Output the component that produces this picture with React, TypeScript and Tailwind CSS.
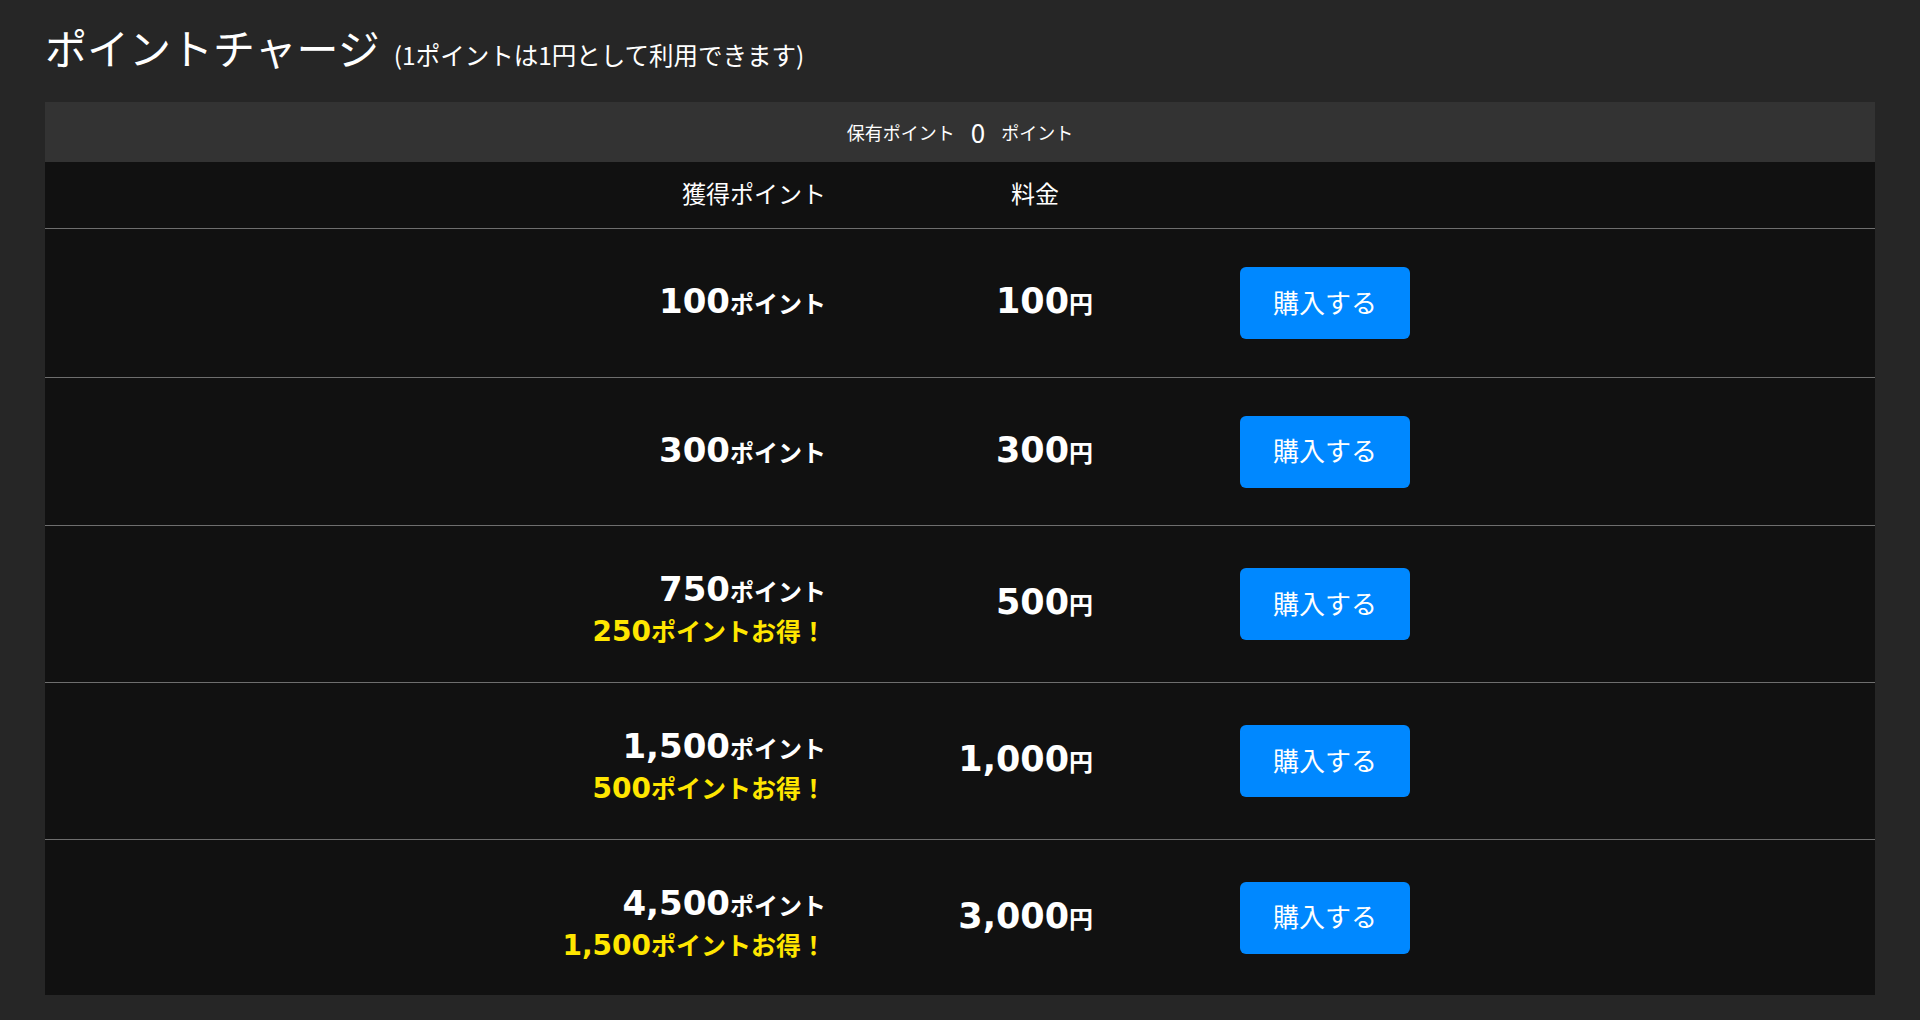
import React from "react";

type Row = {
  points: string;
  bonus?: string;
  price: string;
  h: string;
};

const rows: Row[] = [
  { points: "100", price: "100", h: "h-[149px]" },
  { points: "300", price: "300", h: "h-[148px]" },
  { points: "750", bonus: "250", price: "500", h: "h-[157px]" },
  { points: "1,500", bonus: "500", price: "1,000", h: "h-[157px]" },
  { points: "4,500", bonus: "1,500", price: "3,000", h: "h-[156px]" },
];

export default function App() {
  return (
    <div className="min-h-screen bg-[#262626] px-[45px] text-white font-['Noto_Sans_CJK_JP',sans-serif]">
      <div className="flex h-[102px] items-baseline pt-[19px]">
        <h1 className="text-[42px] font-normal leading-[56px]">ポイントチャージ</h1>
        <span className="ml-[14px] text-[24.5px] leading-[56px]">(1ポイントは1円として利用できます)</span>
      </div>

      <div className="bg-[#111111]">
        <div className="flex h-[60px] items-center justify-center bg-[#333333]">
          <span className="text-[18px]">保有ポイント</span>
          <span className="mx-[16px] text-[26px] leading-none">0</span>
          <span className="text-[18px]">ポイント</span>
        </div>

        <div className="grid h-[66px] grid-cols-[781px_267px_1fr] items-center pb-[5px]">
          <div className="text-right text-[24px]">獲得ポイント</div>
          <div className="pr-[34px] text-right text-[24px]">料金</div>
          <div />
        </div>

        {rows.map((r) => (
          <div
            key={r.points}
            className={`grid grid-cols-[781px_267px_1fr] items-center border-t border-[#6e6e6e] ${r.h}`}
          >
            <div className={`flex flex-col items-end ${r.bonus ? "mt-[12px]" : ""}`}>
              <div className="text-[24px] font-bold leading-[40px]">
                <span className="font-['DejaVu_Sans','Noto_Sans_CJK_JP',sans-serif] text-[34px] leading-none">
                  {r.points}
                </span>
                <span className="leading-none">ポイント</span>
              </div>
              {r.bonus && (
                <div className="text-[25px] font-bold leading-[38px] text-[#ffe600]">
                  <span className="font-['DejaVu_Sans','Noto_Sans_CJK_JP',sans-serif] text-[28px] leading-none">
                    {r.bonus}
                  </span>
                  <span className="leading-none">ポイントお得！</span>
                </div>
              )}
            </div>
            <div className="flex justify-end">
              <div className="text-[24px] font-bold leading-[40px]">
                <span className="font-['DejaVu_Sans','Noto_Sans_CJK_JP',sans-serif] text-[35px] leading-none">
                  {r.price}
                </span>
                <span className="leading-none">円</span>
              </div>
            </div>
            <div>
              <button className="ml-[147px] h-[72px] w-[170px] rounded-[6px] bg-[#0088ff] pb-[4px] text-[26px] text-white">
                購入する
              </button>
            </div>
          </div>
        ))}
      </div>
    </div>
  );
}
